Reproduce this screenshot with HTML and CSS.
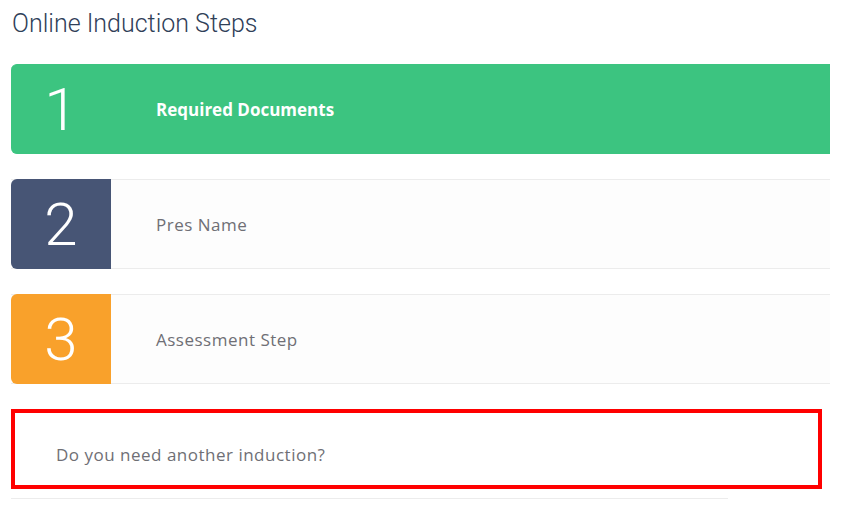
FILE: index.html
```html
<!DOCTYPE html>
<html lang="en">
<head>
    <meta charset="UTF-8">
    <meta name="viewport" content="width=device-width, initial-scale=1.0">
    <title>Online Induction Steps</title>
    <link rel="stylesheet" href="styles.css">
</head>
<body>
    <div class="container">
        <h2 class="page-title">Online Induction Steps</h2>

        <div class="step step-active">
            <div class="step-number">1</div>
            <div class="step-label">Required Documents</div>
        </div>

        <div class="step">
            <div class="step-number step-navy">2</div>
            <div class="step-label">Pres Name</div>
        </div>

        <div class="step">
            <div class="step-number step-orange">3</div>
            <div class="step-label">Assessment Step</div>
        </div>

        <div class="another">
            <div class="another-box">
                <p>Do you need another induction?</p>
            </div>
            <div class="another-line"></div>
        </div>
    </div>
</body>
</html>
```

FILE: styles.css
```css
:root {
    --green: #3cc480;
    --navy: #475575;
    --orange: #f9a12b;
    --text-color: #6f6f75;
    --line-color: #ececec;
}
body {
    margin: 0;
    padding: 0;
    background-color: white;
    font-family: 'Open Sans', sans-serif;
}
.container {
    width: 819px;
    padding: 0 0 0 11px;
}
.page-title {
    margin: 0;
    padding: 8px 0 0 1px;
    height: 64px;
    box-sizing: border-box;
    font-family: 'Roboto', sans-serif;
    font-weight: 300;
    font-size: 25px;
    line-height: 32px;
    color: #2f4058;
}
.step {
    display: flex;
    align-items: center;
    height: 90px;
    margin-bottom: 25px;
    border-top: 1px solid var(--line-color);
    border-bottom: 1px solid var(--line-color);
    box-sizing: border-box;
    background-color: #fdfdfd;
}
.step-active {
    background-color: var(--green);
    border-color: var(--green);
    border-radius: 6px 0 0 6px;
}
.step-number {
    width: 100px;
    align-self: stretch;
    margin: -1px 0;
    display: flex;
    align-items: center;
    justify-content: center;
    border-radius: 6px 0 0 6px;
    font-family: 'Roboto', sans-serif;
    font-weight: 300;
    font-size: 60px;
    color: white;
}
.step-navy {
    background-color: var(--navy);
}
.step-orange {
    background-color: var(--orange);
}
.step-label {
    padding-left: 45px;
    font-size: 17px;
    letter-spacing: 0.5px;
    color: var(--text-color);
}
.step-active .step-label {
    color: white;
    font-weight: 700;
    letter-spacing: 0;
}
.another-box {
    width: 811px;
    height: 80px;
    border: 4px solid red;
    box-sizing: border-box;
    display: flex;
    align-items: center;
    padding: 10px 0 0 41px;
}
.another-box p {
    margin: 0;
    font-size: 17px;
    letter-spacing: 0.5px;
    color: var(--text-color);
}
.another-line {
    width: 717px;
    margin-top: 9px;
    border-top: 1px solid var(--line-color);
}
```
